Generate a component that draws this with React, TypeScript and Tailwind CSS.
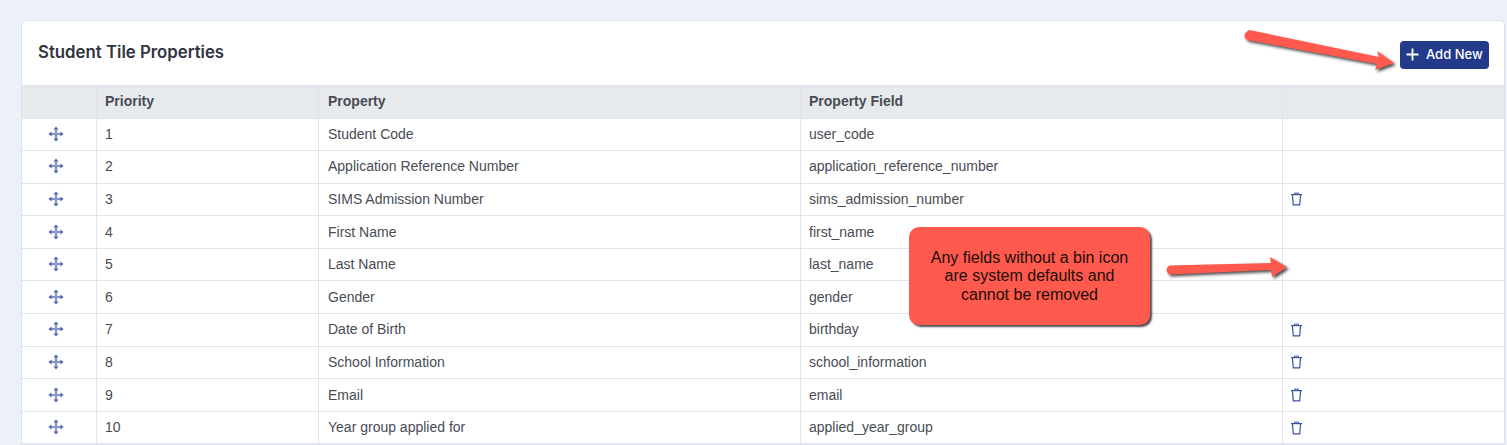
const rows: [string, string, string, boolean][] = [
  ["1", "Student Code", "user_code", false],
  ["2", "Application Reference Number", "application_reference_number", false],
  ["3", "SIMS Admission Number", "sims_admission_number", true],
  ["4", "First Name", "first_name", false],
  ["5", "Last Name", "last_name", false],
  ["6", "Gender", "gender", false],
  ["7", "Date of Birth", "birthday", true],
  ["8", "School Information", "school_information", true],
  ["9", "Email", "email", true],
  ["10", "Year group applied for", "applied_year_group", true],
];

function MoveIcon() {
  return (
    <svg width="16" height="16" viewBox="0 0 16 16" fill="none">
      <path d="M8 2.5V13.5M2.5 8H13.5" stroke="#8593c9" strokeWidth="2.2" />
      <path d="M8 .4 10.6 3.6H5.4ZM8 15.6 5.4 12.4H10.6ZM.4 8 3.6 5.4V10.6ZM15.6 8 12.4 10.6V5.4Z" fill="#5468b0" />
    </svg>
  );
}

function BinIcon() {
  return (
    <svg width="13" height="14" viewBox="0 0 13 14" fill="none" stroke="#3a52a0" strokeWidth="1.2">
      <path d="M1 2.6H12" />
      <path d="M4.5 2.4V1.1H8.5V2.4" strokeWidth="1" />
      <path d="M2.4 2.8 3.3 12.9H9.7L10.6 2.8" />
    </svg>
  );
}

const cols = "grid grid-cols-[75px_222px_482px_482px_1fr]";
const cell = "flex items-center px-2 border-r border-[#dfe3ec] last:border-r-0";

export default function App() {
  return (
    <div className="relative h-[445px] w-[1507px] overflow-hidden bg-[#ecf0f8] pt-5 pl-[21px] pr-0.5 font-['Liberation_Sans',sans-serif] text-sm text-[#484c54]">
      <div className="rounded-t-[5px] border border-[#dde3ec] bg-white">
        <div className="flex h-[64px] items-center justify-between pl-4 pr-[15px]">
          <h1 className="font-['Inter',sans-serif] text-[16.8px] font-semibold text-[#30343e]">Student Tile Properties</h1>
          <button className="mt-[3px] flex h-7 w-[89px] items-center gap-[7px] rounded bg-[#233a8b] pl-[6px] font-['Inter',sans-serif] text-[13px] font-medium text-white">
            <svg width="13" height="13" viewBox="0 0 13 13" stroke="white" strokeWidth="1.8"><path d="M6.5 .5V12.5M.5 6.5H12.5" /></svg>
            Add New
          </button>
        </div>
        <div className={`${cols} h-[33.5px] border-y border-[#dde3ec] bg-[#e7eaed] pb-px font-bold`}>
          <div className={cell} />
          <div className={cell}>Priority</div>
          <div className={`${cell} pl-[9px]`}>Property</div>
          <div className={cell}>Property Field</div>
          <div className={cell} />
        </div>
        {rows.map(([n, name, field, bin]) => (
          <div key={n} className={`${cols} h-[32.6px] border-b border-[#dfe3ec]`}>
            <div className={`${cell} justify-center pb-px pl-[7px] pr-[14px]`}><MoveIcon /></div>
            <div className={`${cell} pb-px`}>{n}</div>
            <div className={`${cell} pb-px pl-[9px]`}>{name}</div>
            <div className={`${cell} pb-px`}>{field}</div>
            <div className={`${cell} pl-[7px]`}>{bin && <BinIcon />}</div>
          </div>
        ))}
      </div>

      <div className="absolute left-[909px] top-[227px] flex h-[98px] w-[241px] items-center justify-center rounded-[10px] bg-[#ff5a4d] px-5 pt-px text-center text-[16px] leading-[18.5px] text-[#1a0d0c] shadow-[2px_2px_2px_rgba(0,0,0,0.7)]">
        Any fields without a bin icon are system defaults and cannot be removed
      </div>

      <svg className="absolute left-0 top-0 drop-shadow-[2px_2px_1.5px_rgba(0,0,0,0.7)]" width="1507" height="445" fill="#ff5a4d">
        <path d="M1249 30 1379 57 1377 51 1394 63 1375 70 1377 64 1247 40Q1241 35 1249 30Z" />
        <path d="M1169 265.5 1271 263 1270 257 1287 267 1272 277 1271 270 1169 274.5Q1164 270 1169 265.5Z" />
      </svg>
    </div>
  );
}
